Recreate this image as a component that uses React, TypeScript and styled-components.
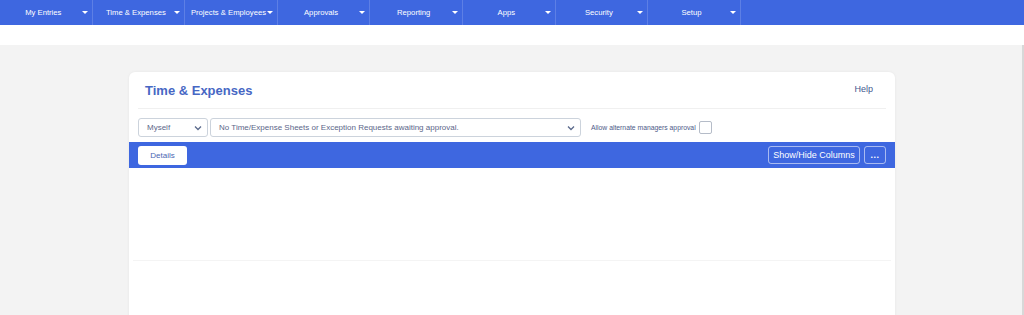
import React from 'react'
import styled, { createGlobalStyle } from 'styled-components'

const GlobalStyle = createGlobalStyle`
  html, body {
    margin: 0;
    padding: 0;
    background: #f3f3f3;
    font-family: 'Liberation Sans', Arial, sans-serif;
  }
`

const NAV_ITEMS = [
  'My Entries',
  'Time & Expenses',
  'Projects & Employees',
  'Approvals',
  'Reporting',
  'Apps',
  'Security',
  'Setup',
]

const NavBar = styled.nav`
  display: flex;
  height: 25px;
  background-color: #3e67e0;
`

const NavItem = styled.div`
  position: relative;
  width: 92.6px;
  display: flex;
  align-items: center;
  justify-content: center;
  padding-right: 5px;
  box-sizing: border-box;
  border-right: 1px solid rgba(255, 255, 255, 0.16);
  color: #ffffff;
  font-size: 7.7px;
  white-space: nowrap;
`

const Caret = styled.span`
  position: absolute;
  right: 4px;
  top: 11px;
  width: 0;
  height: 0;
  border-left: 3px solid transparent;
  border-right: 3px solid transparent;
  border-top: 3px solid #ffffff;
`

const SubBand = styled.div`
  height: 20px;
  background: #ffffff;
`

const Page = styled.main`
  padding: 27px 0 0 2px;
  min-height: 270px;
  display: flex;
  justify-content: center;
  border-right: 2px solid #d8d8d8;
`

const Card = styled.section`
  width: 766px;
  background: #ffffff;
  border-radius: 6px 6px 0 0;
  box-shadow: 0 0 3px rgba(0, 0, 0, 0.06);
  display: flex;
  flex-direction: column;
`

const CardHeader = styled.header`
  margin: 0 9px;
  height: 36px;
  display: flex;
  align-items: center;
  justify-content: space-between;
  padding: 0 13px 0 7px;
  border-bottom: 1px solid #f0f0f0;
`

const Title = styled.h1`
  margin: 0;
  font-size: 13px;
  font-weight: bold;
  color: #4767c4;
`

const HelpLink = styled.span`
  font-size: 9px;
  color: #44598f;
  margin-top: -3px;
`

const Filters = styled.div`
  display: flex;
  align-items: center;
  gap: 2px;
  padding: 9px 9px 0;
  height: 19px;
`

const Select = styled.div<{ width: number }>`
  width: ${p => p.width}px;
  height: 19px;
  box-sizing: border-box;
  border: 1px solid #ccd3dc;
  border-radius: 3px;
  display: flex;
  align-items: center;
  justify-content: space-between;
  padding: 0 5px 0 8px;
  font-size: 8px;
  color: #5b6689;
`

const Chevron = () => (
  <svg width="8" height="6" viewBox="0 0 8 6">
    <path d="M1 1.5 L4 4.5 L7 1.5" fill="none" stroke="#5b6a8c" strokeWidth="1.3" />
  </svg>
)

const AltLabel = styled.label`
  display: flex;
  align-items: center;
  gap: 3px;
  margin-left: 8px;
  font-size: 6.8px;
  color: #4d5a88;
`

const Checkbox = styled.span`
  width: 11px;
  height: 11px;
  border: 1px solid #b5bcc8;
  border-radius: 2px;
  background: #fff;
`

const Toolbar = styled.div`
  margin-top: 5px;
  height: 26px;
  background: #3e67e0;
  display: flex;
  align-items: center;
  justify-content: space-between;
  padding: 0 9px;
`

const DetailsButton = styled.button`
  width: 49px;
  height: 19px;
  border: none;
  border-radius: 3px;
  background: #ffffff;
  color: #4a67b3;
  font-family: inherit;
  font-size: 8px;
  padding: 0;
`

const ToolGroup = styled.div`
  display: flex;
  gap: 4px;
`

const OutlineButton = styled.button<{ width: number; bold?: boolean }>`
  width: ${p => p.width}px;
  height: 18px;
  border: 1px solid rgba(255, 255, 255, 0.55);
  border-radius: 3px;
  background: transparent;
  color: #ffffff;
  font-family: inherit;
  font-size: 9px;
  font-weight: ${p => (p.bold ? 'bold' : 'normal')};
  letter-spacing: ${p => (p.bold ? '0.5px' : 'normal')};
  padding: 0;
  line-height: 1;
`

const GridArea = styled.div`
  height: 92px;
  border-bottom: 1px solid #f4f4f4;
  margin: 0 4px;
`

const GridFooter = styled.div`
  height: 60px;
`

export default function App() {
  return (
    <>
      <GlobalStyle />
      <NavBar>
        {NAV_ITEMS.map(item => (
          <NavItem key={item}>
            {item}
            <Caret />
          </NavItem>
        ))}
      </NavBar>
      <SubBand />
      <Page>
        <Card>
          <CardHeader>
            <Title>Time &amp; Expenses</Title>
            <HelpLink>Help</HelpLink>
          </CardHeader>
          <Filters>
            <Select width={70}>
              Myself
              <Chevron />
            </Select>
            <Select width={371}>
              No Time/Expense Sheets or Exception Requests awaiting approval.
              <Chevron />
            </Select>
            <AltLabel>
              Allow alternate managers approval
              <Checkbox />
            </AltLabel>
          </Filters>
          <Toolbar>
            <DetailsButton>Details</DetailsButton>
            <ToolGroup>
              <OutlineButton width={92}>Show/Hide Columns</OutlineButton>
              <OutlineButton width={22} bold>
                ...
              </OutlineButton>
            </ToolGroup>
          </Toolbar>
          <GridArea />
          <GridFooter />
        </Card>
      </Page>
    </>
  )
}
